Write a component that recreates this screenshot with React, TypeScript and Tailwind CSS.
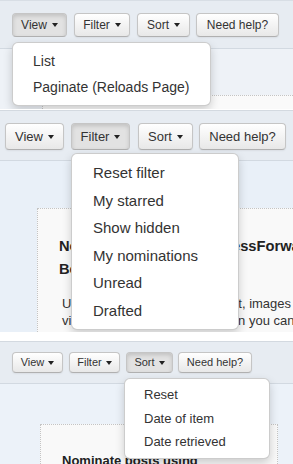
import React from 'react';

type Size = 'sm' | 'md' | 'lg';

const btnSize: Record<Size, string> = {
  sm: 'h-[21px] text-[11px] gap-[4px] rounded-[4px]',
  md: 'h-[24px] text-[12px] gap-[5px] rounded-[4px]',
  lg: 'h-[27px] text-[13px] gap-[5px] rounded-[4px]',
};

// widths + left offsets of View / Filter / Sort / Need help? in each shot
const btnWidths: Record<Size, string[]> = {
  sm: ['w-[51px]', 'ml-[6px] w-[51px]', 'ml-[6px] w-[47px]', 'ml-[5px] w-[74px]'],
  md: ['w-[55px]', 'ml-[7px] w-[56px]', 'ml-[7px] w-[53px]', 'ml-[6px] w-[83px]'],
  lg: ['w-[59px]', 'ml-[7px] w-[59px]', 'ml-[8px] w-[55px]', 'ml-[6px] w-[87px]'],
};

const Caret: React.FC = () => (
  <span className="inline-block h-0 w-0 border-x-[3px] border-t-[4px] border-x-transparent border-t-[#222]" />
);

const Btn: React.FC<{ label: string; size: Size; idx: number; caret?: boolean; active?: boolean }> = ({
  label,
  size,
  idx,
  caret = false,
  active = false,
}) => (
  <div
    className={`flex shrink-0 items-center justify-center border border-[#c5c5c5] border-b-[#b0b0b0] text-[#333] whitespace-nowrap ${btnSize[size]} ${btnWidths[size][idx]} ${
      active
        ? 'bg-[#e2e2e2] shadow-[inset_0_2px_4px_rgba(0,0,0,0.15)]'
        : 'bg-gradient-to-b from-white to-[#e8e8e8] shadow-[0_1px_2px_rgba(0,0,0,0.06)]'
    }`}
  >
    <span>{label}</span>
    {caret && <Caret />}
  </div>
);

const Toolbar: React.FC<{ size: Size; active: string; className: string }> = ({ size, active, className }) => (
  <div className={`flex border-b border-[#d2d9e1] bg-[#e7ecf2] ${className}`}>
    <Btn label="View" size={size} idx={0} caret active={active === 'View'} />
    <Btn label="Filter" size={size} idx={1} caret active={active === 'Filter'} />
    <Btn label="Sort" size={size} idx={2} caret active={active === 'Sort'} />
    <Btn label="Need help?" size={size} idx={3} />
  </div>
);

const Menu: React.FC<{ items: string[]; className: string; itemClass: string }> = ({ items, className, itemClass }) => (
  <ul
    className={`absolute rounded-[6px] border border-[rgba(0,0,0,0.2)] bg-white text-[#333] shadow-[0_4px_10px_rgba(0,0,0,0.18)] ${className}`}
  >
    {items.map((item) => (
      <li key={item} className={`whitespace-nowrap ${itemClass}`}>
        {item}
      </li>
    ))}
  </ul>
);

export default function App() {
  return (
    <div className="w-[293px] h-[464px] overflow-hidden bg-white font-['Liberation_Sans',Arial,Helvetica,sans-serif]">
      {/* View menu open */}
      <section className="relative h-[110px] overflow-hidden border-t border-b border-t-[#d8dee5] border-b-white bg-[#eef2f7]">
        <Toolbar size="md" active="View" className="h-[48px] pl-[12px] pt-[12px]" />
        <div className="ml-[42px] mt-[46px] h-[40px] border-l border-t border-dotted border-[#c4c4c4] bg-[#fafafa]" />
        <Menu
          items={['List', 'Paginate (Reloads Page)']}
          className="left-[12px] top-[41px] w-[199px] py-[5px]"
          itemClass="h-[26px] pl-[20px] text-[14px] leading-[26px]"
        />
      </section>

      {/* Filter menu open */}
      <section className="relative h-[222px] overflow-hidden border-t border-[#d3d9e0] bg-[#e9f0f8]">
        <Toolbar size="lg" active="Filter" className="h-[50px] pl-[5px] pt-[12px]" />
        <div className="ml-[37px] mt-[47px] w-[330px] h-[200px] border-l border-t border-dotted border-[#c4c4c4] bg-[#f9f9f9] pl-[21px] pt-[26px] text-[#222]">
          <h2 className="whitespace-nowrap text-[14.7px] font-bold leading-[23px]">
            Nominate posts using PressForward
            <br />
            Bookmarklet
          </h2>
          <p className="mt-[14px] pl-[3px] whitespace-nowrap text-[13px] leading-[17px] text-[#333]">
            Use the bookmarklet to get text, images
            <br />
            video and more in a page. Then you can
            <br />
            nominate the content for review by editors.
          </p>
        </div>
        <Menu
          items={['Reset filter', 'My starred', 'Show hidden', 'My nominations', 'Unread', 'Drafted']}
          className="left-[71px] top-[42px] w-[168px] py-[5px]"
          itemClass="h-[27.5px] pl-[21px] text-[15px] leading-[27.5px]"
        />
      </section>

      <div className="h-[9px] bg-white" />

      {/* Sort menu open */}
      <section className="relative h-[123px] overflow-hidden border-t border-[#d3d9e0] bg-[#ecf2f9]">
        <Toolbar size="sm" active="Sort" className="h-[42px] pl-[12px] pt-[10px]" />
        <div className="ml-[40px] mt-[40px] w-[238px] h-[80px] border-l border-r border-t border-dotted border-[#c4c4c4] bg-[#f9f9f9] pl-[21px] pt-[27px] text-[#222]">
          <h2 className="text-[13px] font-bold leading-[18px]">Nominate posts using PressForward Bookmarklet</h2>
        </div>
        <Menu
          items={['Reset', 'Date of item', 'Date retrieved']}
          className="left-[124px] top-[36px] w-[146px] py-[4px]"
          itemClass="h-[23.5px] pl-[19px] text-[13px] leading-[23.5px]"
        />
      </section>
    </div>
  );
}
